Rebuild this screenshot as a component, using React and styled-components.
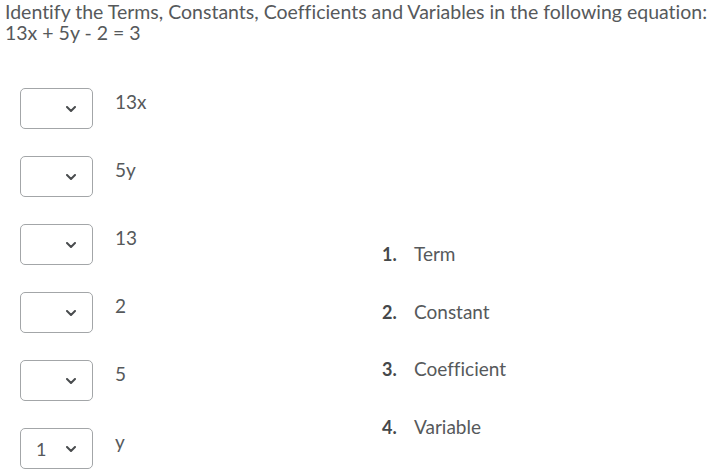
import React from "react";
import styled, { createGlobalStyle } from "styled-components";

const Global = createGlobalStyle`
  html, body { margin: 0; padding: 0; background: #fff; }
  body {
    font-family: Lato, "Noto Sans", sans-serif;
    color: #56595b;
    font-variant-ligatures: none;
  }
`;

const Page = styled.div`
  width: 714px;
  height: 476px;
  overflow: hidden;
`;

const Title = styled.div`
  padding: 1px 0 0 5px;
  height: 41px;
  font-size: 19.5px;
  line-height: 21px;
  white-space: nowrap;
`;

const Body = styled.div`
  display: grid;
  grid-template-columns: 382px 1fr;
  padding-top: 46px;
`;

const Rows = styled.div`
  display: flex;
  flex-direction: column;
  gap: 27px;
  padding-left: 20px;
`;

const Row = styled.div`
  display: flex;
  align-items: flex-start;
  gap: 22px;
`;

const Select = styled.div`
  box-sizing: border-box;
  width: 73px;
  height: 41px;
  border: 1px solid #a3a6a8;
  border-radius: 5px;
  display: flex;
  align-items: center;
  padding-left: 15px;
  position: relative;
  font-size: 18px;
`;

const Chevron = styled.svg`
  position: absolute;
  left: 45px;
  top: 17px;
`;

const Label = styled.div`
  font-size: 19px;
  line-height: 22px;
  padding-top: 3px;
`;

const List = styled.ol`
  list-style: none;
  margin: 0;
  padding: 155px 0 0 0;
  display: flex;
  flex-direction: column;
  gap: 35.5px;
`;

const Item = styled.li`
  display: flex;
  font-size: 19px;
  line-height: 22px;
`;

const Num = styled.span`
  width: 32px;
  font-weight: 700;
  color: #45484a;
  font-size: 18px;
`;

const rows = [
  ["", "13x"],
  ["", "5y"],
  ["", "13"],
  ["", "2"],
  ["", "5"],
  ["1", "y"],
];

const items = ["Term", "Constant", "Coefficient", "Variable"];

export default function App() {
  return (
    <Page>
      <Global />
      <Title>
        Identify the Terms, Constants, Coefficients and Variables in the following equation:
        <br />
        13x + 5y - 2 = 3
      </Title>
      <Body>
        <Rows>
          {rows.map(([v, l], i) => (
            <Row key={i}>
              <Select>
                {v}
                <Chevron width="10" height="6" viewBox="0 0 10 6">
                  <path d="M1 1 L5 5 L9 1" fill="none" stroke="#494c4e" strokeWidth="2" strokeLinecap="round" strokeLinejoin="round" />
                </Chevron>
              </Select>
              <Label>{l}</Label>
            </Row>
          ))}
        </Rows>
        <List>
          {items.map((t, i) => (
            <Item key={t}>
              <Num>{i + 1}.</Num>
              {t}
            </Item>
          ))}
        </List>
      </Body>
    </Page>
  );
}
